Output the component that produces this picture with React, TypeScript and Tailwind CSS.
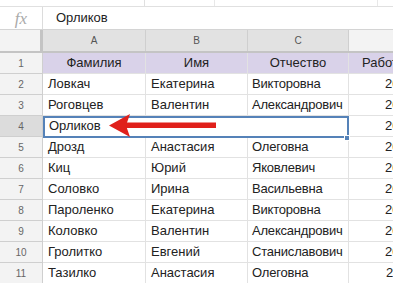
const COLS = [103, 102, 101, 70];

const ROWS: [string, string, string, string][] = [
  ["Ловкач", "Екатерина", "Викторовна", "2014"],
  ["Роговцев", "Валентин", "Александрович", "2015"],
  ["Орликов", "", "", "2016"],
  ["Дрозд", "Анастасия", "Олеговна", "2013"],
  ["Киц", "Юрий", "Яковлевич", "2017"],
  ["Соловко", "Ирина", "Васильевна", "2012"],
  ["Пароленко", "Екатерина", "Викторовна", "2016"],
  ["Коловко", "Валентин", "Александрович", "2015"],
  ["Гролитко", "Евгений", "Станиславович", "2014"],
  ["Тазилко", "Анастасия", "Олеговна", "2011"],
];

function RowNum({ n, active }: { n: number; active?: boolean }) {
  return (
    <div
      className={`w-[43px] shrink-0 flex items-center justify-center text-[10px] text-[#666] border-r border-b border-[#cfcfcf] ${
        active ? "bg-[#dcdcdc]" : "bg-[#f3f3f3]"
      }`}
    >
      {n}
    </div>
  );
}

export default function App() {
  return (
    <div
      className="relative w-[393px] h-[283px] overflow-hidden bg-white text-[13px] text-[#222]"
      style={{ fontFamily: "Arial, 'Liberation Sans', sans-serif" }}
    >
      {/* toolbar remains */}
      <div className="h-[7px] flex border-b border-[#e0e0e0]">
        <div className="w-[145px] border-r border-[#e0e0e0]" />
        <div className="w-[70px] border-r border-[#e8e8e8]" />
        <div className="w-[163px] border-r border-[#e8e8e8]" />
      </div>

      {/* formula bar */}
      <div className="h-[23px] flex items-center border-b border-[#d4d4d4]">
        <div className="w-[43px] h-full flex items-center justify-center border-r border-[#dcdcdc]">
          <span
            className="italic text-[#aaa] text-[17px] leading-none"
            style={{ fontFamily: "'Liberation Serif', 'DejaVu Serif', serif" }}
          >
            fx
          </span>
        </div>
        <div className="pl-[13px]">Орликов</div>
      </div>

      {/* column headers */}
      <div className="h-[23px] flex border-b-2 border-[#c4c4c4]">
        <div className="w-[43px] shrink-0 bg-[#f3f3f3] border-r-[3px] border-[#c4c4c4]" />
        {["A", "B", "C", ""].map((c, i) => (
          <div
            key={i}
            style={{ width: COLS[i] }}
            className={`shrink-0 flex items-center justify-center text-[10px] text-[#555] border-r border-[#cfcfcf] ${
              i < 3 ? "bg-[#e2e2e2]" : "bg-[#f3f3f3]"
            }`}
          >
            {c}
          </div>
        ))}
      </div>

      {/* row 1 */}
      <div className="h-[21px] flex">
        <RowNum n={1} />
        {["Фамилия", "Имя", "Отчество"].map((t, i) => (
          <div
            key={i}
            style={{ width: COLS[i] }}
            className="shrink-0 flex items-center justify-center bg-[#d9d2e9] border-r border-b border-[#e2e2e2]"
          >
            {t}
          </div>
        ))}
        <div
          style={{ width: COLS[3] }}
          className="shrink-0 flex items-center pl-[13px] bg-[#d9d2e9] border-b border-[#e2e2e2] overflow-hidden whitespace-nowrap"
        >
          Работает с
        </div>
      </div>

      {ROWS.map((r, idx) => {
        const n = idx + 2;
        const merged = n === 4;
        return (
          <div key={n} className="h-[21px] flex">
            <RowNum n={n} active={merged} />
            {merged ? (
              <div
                style={{ width: COLS[0] + COLS[1] + COLS[2] }}
                className="shrink-0 flex items-center pl-[6px] border-r border-b border-[#e2e2e2]"
              >
                {r[0]}
              </div>
            ) : (
              r.slice(0, 3).map((t, i) => (
                <div
                  key={i}
                  style={{ width: COLS[i] }}
                  className={`shrink-0 flex items-center border-r border-b border-[#e2e2e2] whitespace-nowrap overflow-hidden ${
                    i === 2 ? "pl-[4px] tracking-[-0.2px]" : "pl-[5px]"
                  }`}
                >
                  {t}
                </div>
              ))
            )}
            <div
              style={{ width: COLS[3] }}
              className="shrink-0 flex items-center justify-end pr-[5px] border-b border-[#e2e2e2]"
            >
              {r[3]}
            </div>
          </div>
        );
      })}

      {/* selection */}
      <div className="absolute left-[43px] top-[116px] w-[306px] h-[22px] border-2 border-[#5582b8]" />
      <div className="absolute left-[344px] top-[135px] w-[6px] h-[6px] bg-[#5582b8] border border-white" />

      {/* arrow */}
      <svg className="absolute left-0 top-0" width="393" height="283" viewBox="0 0 393 283">
        <rect x="126" y="122.5" width="90" height="5.5" fill="#e0201b" />
        <polygon points="109,125.5 130,114 126,125.5 130,137" fill="#e0201b" />
      </svg>
    </div>
  );
}
